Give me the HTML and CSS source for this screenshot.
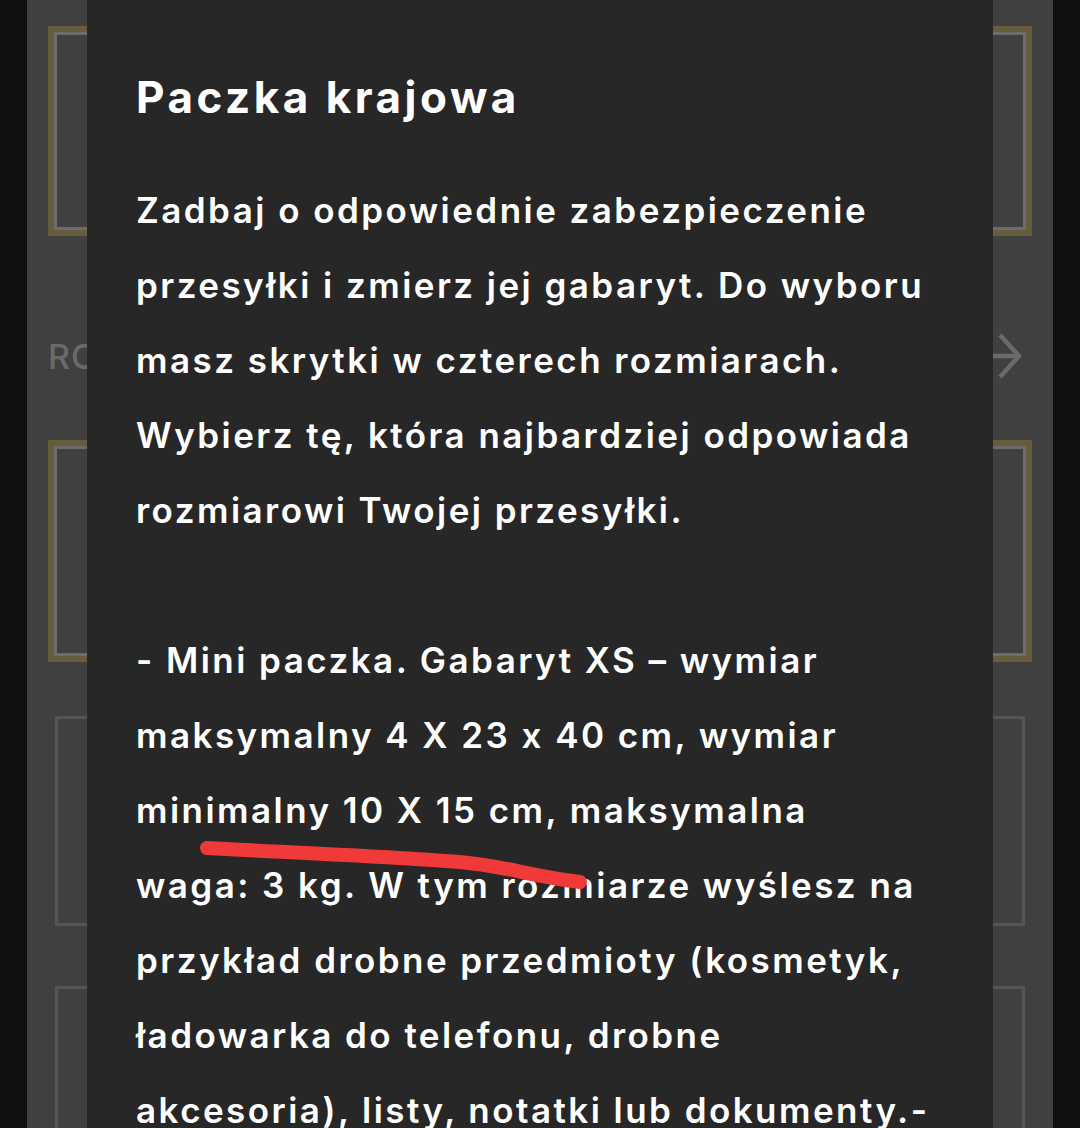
FILE: index.html
```html
<!DOCTYPE html>
<html lang="pl">
<head>
<meta charset="utf-8">
<title>Paczka krajowa</title>
<link rel="stylesheet" href="styles.css">
</head>
<body>
<div class="page">
  <div class="card card-gold card-first"></div>
  <div class="row">
    <span class="row-label">ROZMIAR PACZKI</span>
    <svg class="row-arrow" width="44" height="48" viewBox="0 0 44 48">
      <path d="M2 24 H40 M22 3 L41 24 L22 45" fill="none" stroke="#6a6a6a" stroke-width="4.5"/>
    </svg>
  </div>
  <div class="card card-gold card-second"></div>
  <div class="card card-plain"></div>
  <div class="card card-plain"></div>
</div>

<div class="modal">
  <h1 class="modal-title">Paczka krajowa</h1>
  <p class="modal-text">Zadbaj o odpowiednie zabezpieczenie<br>przesyłki i zmierz jej gabaryt. Do wyboru<br>masz skrytki w czterech rozmiarach.<br>Wybierz tę, która najbardziej odpowiada<br>rozmiarowi Twojej przesyłki.</p>
  <p class="modal-text">- Mini paczka. Gabaryt XS – wymiar<br>maksymalny 4 X 23 x 40 cm, wymiar<br>minimalny 10 X 15 cm, maksymalna<br>waga: 3 kg. W tym rozmiarze wyślesz na<br>przykład drobne przedmioty (kosmetyk,<br>ładowarka do telefonu, drobne<br>akcesoria), listy, notatki lub dokumenty.-</p>
</div>

<svg class="scribble" width="1080" height="1128" viewBox="0 0 1080 1128">
  <path d="M207 848 C 280 852, 380 856, 460 862 C 505 866, 530 876, 580 882" fill="none" stroke="#f03a3a" stroke-width="14" stroke-linecap="round"/>
</svg>
</body>
</html>
```

FILE: styles.css
```css
* { box-sizing: border-box; }

html, body {
  margin: 0;
  padding: 0;
  height: 1128px;
  overflow: hidden;
  background: #101010;
  font-family: "Inter", "Liberation Sans", sans-serif;
}

body {
  position: relative;
}

.page {
  margin-left: 27px;
  width: 1026px;
  height: 1128px;
  background: #404040;
  padding: 26px 21px 0;
  display: flex;
  flex-direction: column;
  overflow: hidden;
}

.page > * {
  flex: none;
}

.card-gold {
  border: 6px solid #665d3d;
  box-shadow: inset 0 0 0 3px #6c6c6c;
}

.card-first {
  height: 210px;
}

.card-second {
  height: 222px;
}

.row {
  height: 204px;
  display: flex;
  align-items: center;
  justify-content: space-between;
  padding-right: 10px;
  padding-top: 36px;
}

.row-label {
  color: #6a6a6a;
  font-size: 34px;
  font-weight: 500;
  letter-spacing: 1px;
}

.row-arrow {
  display: block;
}

.card-plain {
  margin: 54px 7px 0;
  height: 210px;
  border: 3px solid #555555;
}

.card-plain + .card-plain {
  margin-top: 60px;
}

.modal {
  position: absolute;
  left: 87px;
  top: 0;
  width: 906px;
  height: 1128px;
  background: #272727;
  padding: 71px 20px 0 49px;
  color: #ffffff;
  overflow: hidden;
}

.modal-title {
  margin: 0 0 49px;
  font-size: 44px;
  line-height: 53px;
  font-weight: 700;
  letter-spacing: 3.5px;
}

.modal-text {
  margin: 0 0 75px;
  font-size: 35px;
  line-height: 75px;
  font-weight: 600;
  letter-spacing: 2.45px;
  white-space: nowrap;
}

.scribble {
  position: absolute;
  left: 0;
  top: 0;
  pointer-events: none;
}
```
